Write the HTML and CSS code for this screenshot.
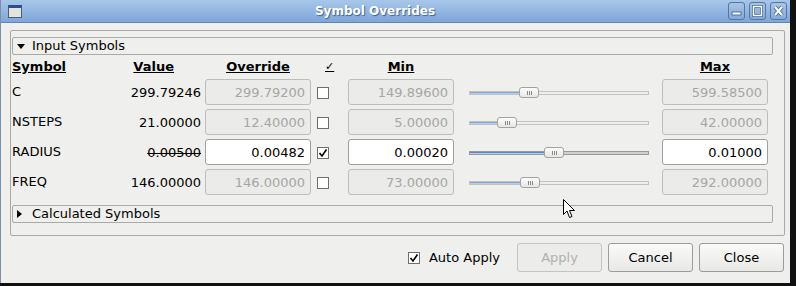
FILE: index.html
```html
<!DOCTYPE html>
<html lang="en">
<head>
    <meta charset="utf-8">
    <title>Symbol Overrides</title>
    <link rel="stylesheet" href="styles.css">
</head>
<body>
    <div class="window">
        <div class="titlebar">
            <span class="win-icon"></span>
            <span class="title">Symbol Overrides</span>
            <div class="win-btns">
                <span class="win-btn"><svg width="17" height="18" viewBox="0 0 17 18"><rect x="4" y="10" width="9" height="3" fill="#fff" stroke="#4d6f9e" stroke-width="1"/></svg></span>
                <span class="win-btn"><svg width="17" height="18" viewBox="0 0 17 18"><rect x="4.5" y="4.5" width="8" height="9" fill="none" stroke="#4d6f9e" stroke-width="3"/><rect x="4.5" y="4.5" width="8" height="9" fill="none" stroke="#fff" stroke-width="1.4"/></svg></span>
                <span class="win-btn"><svg width="17" height="18" viewBox="0 0 17 18"><path d="M5 5 L12 13 M12 5 L5 13" stroke="#4d6f9e" stroke-width="4"/><path d="M5 5 L12 13 M12 5 L5 13" stroke="#fff" stroke-width="2"/></svg></span>
            </div>
        </div>
        <div class="content">
            <div class="frame">
                <div class="section-head"><span class="arrow-down"></span>Input Symbols</div>
                <div class="table">
                    <div class="th th-sym">Symbol</div>
                    <div class="th th-val">Value</div>
                    <div class="th th-ovr">Override</div>
                    <div class="th th-chk">✓</div>
                    <div class="th th-min">Min</div>
                    <div class="th"></div>
                    <div class="th th-max">Max</div>

                    <div class="name">C</div>
                    <div class="val">299.79246</div>
                    <input class="field" disabled value="299.79200">
                    <span class="check"></span>
                    <input class="field" disabled value="149.89600">
                    <div class="slider"><div class="fill" style="width: 52px"></div><span class="handle" style="left: 49px"></span></div>
                    <input class="field" disabled value="599.58500">

                    <div class="name">NSTEPS</div>
                    <div class="val">21.00000</div>
                    <input class="field" disabled value="12.40000">
                    <span class="check"></span>
                    <input class="field" disabled value="5.00000">
                    <div class="slider"><div class="fill" style="width: 30px"></div><span class="handle" style="left: 27px"></span></div>
                    <input class="field" disabled value="42.00000">

                    <div class="name">RADIUS</div>
                    <div class="val"><s>0.00500</s></div>
                    <input class="field" value="0.00482">
                    <span class="check checked"><svg width="10" height="10" viewBox="0 0 10 10"><path d="M1.5 5 L4 8 L8.5 1.5" fill="none" stroke="#000" stroke-width="1.6"/></svg></span>
                    <input class="field" value="0.00020">
                    <div class="slider on"><div class="fill" style="width: 77px"></div><span class="handle" style="left: 74px"></span></div>
                    <input class="field" value="0.01000">

                    <div class="name">FREQ</div>
                    <div class="val">146.00000</div>
                    <input class="field" disabled value="146.00000">
                    <span class="check"></span>
                    <input class="field" disabled value="73.00000">
                    <div class="slider"><div class="fill" style="width: 53px"></div><span class="handle" style="left: 50px"></span></div>
                    <input class="field" disabled value="292.00000">
                </div>
                <div class="section-head calc"><span class="arrow-right"></span>Calculated Symbols</div>
            </div>
            <div class="footer">
                <label class="auto"><span class="check checked"><svg width="10" height="10" viewBox="0 0 10 10"><path d="M1.5 5 L4 8 L8.5 1.5" fill="none" stroke="#000" stroke-width="1.6"/></svg></span>Auto Apply</label>
                <button class="btn" disabled>Apply</button>
                <button class="btn">Cancel</button>
                <button class="btn">Close</button>
            </div>
        </div>
    </div>
    <svg class="cursor" width="13" height="20" viewBox="0 0 13 20"><path d="M0.5 0.5 L0.5 15.5 L4 12 L6.5 18.5 L9 17.5 L6.5 11.5 L11.5 11.5 Z" fill="#fff" stroke="#000" stroke-width="1"/></svg>
</body>
</html>
```

FILE: styles.css
```css
html, body {
    margin: 0;
    background: #111;
}
body {
    width: 796px;
    height: 286px;
    position: relative;
    font-family: "DejaVu Sans", sans-serif;
    font-size: 13px;
    color: #000;
}
.window {
    width: 790px;
    height: 283px;
    background: #efefed;
    box-sizing: border-box;
    border-left: 1px solid #7f8ea3;
}
.titlebar {
    height: 23px;
    box-sizing: border-box;
    background: linear-gradient(#a8c6ea, #7ea6d9);
    border-bottom: 1px solid #5f84b7;
    display: flex;
    align-items: center;
    position: relative;
}
.win-icon {
    width: 12px;
    height: 9px;
    margin-left: 7px;
    border: 1px solid #4c5c78;
    border-top: 3px solid #2b4f8c;
    background: #e4e4de;
}
.title {
    flex: 1;
    text-align: center;
    font-weight: bold;
    font-size: 12px;
    color: #fff;
    text-shadow: 1px 1px 1px #3d5f8f;
}
.win-btns {
    display: flex;
    gap: 4px;
    margin-right: 3px;
}
.win-btn {
    width: 17px;
    height: 18px;
    box-sizing: border-box;
    border: 1px solid #55769f;
    border-radius: 3px;
    background: linear-gradient(#a9c4e6, #86a9d7);
    display: flex;
    align-items: center;
    justify-content: center;
}
.win-btn svg {
    margin: -1px;
}
.content {
    padding: 7px 5px 0 9px;
}
.frame {
    border: 1px solid #a9a9a7;
    border-radius: 2px;
    padding: 6px 11px 12px 1px;
}
.section-head {
    height: 18px;
    box-sizing: border-box;
    border: 1px solid #a9a9a7;
    border-radius: 2px;
    display: flex;
    align-items: center;
    line-height: 16px;
}
.section-head.calc {
    margin-top: 10px;
}
.arrow-down {
    width: 0;
    height: 0;
    border-left: 4px solid transparent;
    border-right: 4px solid transparent;
    border-top: 5px solid #000;
    margin: 0 7px 0 4px;
}
.arrow-right {
    width: 0;
    height: 0;
    border-top: 4px solid transparent;
    border-bottom: 4px solid transparent;
    border-left: 5px solid #000;
    margin: 0 10px 0 4px;
}
.table {
    display: grid;
    grid-template-columns: 60px 129px 110px 18px 125px 195px 119px;
    grid-template-rows: 20px repeat(4, 26px);
    row-gap: 4px;
    align-items: center;
}
.th {
    font-weight: bold;
    text-decoration: underline;
    align-self: start;
    height: 20px;
    box-sizing: border-box;
    padding-top: 4px;
    line-height: 16px;
}
.th-val {
    text-align: right;
    padding-right: 27px;
}
.th-ovr, .th-min, .th-max {
    text-align: center;
    width: 106px;
    justify-self: end;
}
.th-chk {
    font-weight: normal;
    padding-left: 14px;
    font-size: 11px;
}
.name {
    line-height: 16px;
}
.val {
    text-align: right;
}
.val s {
    text-decoration-thickness: 1px;
}
.field {
    width: 106px;
    height: 26px;
    box-sizing: border-box;
    justify-self: end;
    font-family: "DejaVu Sans", sans-serif;
    font-size: 13px;
    text-align: right;
    padding: 0 5px 0 0;
    border: 1px solid #9f9f9d;
    border-radius: 3px;
    background: #fff;
    color: #000;
}
.field:disabled {
    background: #ebebe9;
    border-color: #bdbdbb;
    color: #a6a6a4;
}
.check {
    width: 12px;
    height: 12px;
    box-sizing: border-box;
    border: 1px solid #6e6e6c;
    background: #fff;
    justify-self: end;
    margin-top: 2px;
    display: flex;
    align-items: center;
    justify-content: center;
}
.slider {
    width: 180px;
    height: 4px;
    justify-self: end;
    box-sizing: border-box;
    border: 1px solid #c2c2c0;
    background: #eeeeec;
    position: relative;
    margin-top: 1px;
}
.slider .fill {
    height: 2px;
    background: #7da6db;
    border-bottom: 1px solid #b7cdea;
    box-sizing: border-box;
}
.slider.on {
    border-color: #999997;
    background: #d0d0ce;
}
.slider.on .fill {
    background: #5b87c3;
}
.handle {
    position: absolute;
    top: -5px;
    width: 20px;
    height: 11px;
    box-sizing: border-box;
    border: 1px solid #a2a2a0;
    border-radius: 3px;
    background: linear-gradient(#fdfdfd, #e6e6e4) center / cover no-repeat;
}
.handle::after {
    content: "";
    position: absolute;
    left: 7px;
    top: 3px;
    width: 5px;
    height: 4px;
    background: repeating-linear-gradient(90deg, #8a8a88 0 1px, transparent 1px 2px);
}
.footer {
    display: flex;
    justify-content: flex-end;
    align-items: center;
    gap: 6px;
    padding: 7px 1px 0 0;
}
.auto {
    display: flex;
    align-items: center;
    margin-right: 11px;
}
.auto .check {
    margin: 0 9px 0 0;
}
.btn {
    width: 85px;
    height: 29px;
    font-family: "DejaVu Sans", sans-serif;
    font-size: 13px;
    color: #000;
    border: 1px solid #9c9c9a;
    border-radius: 3px;
    background: linear-gradient(#fafaf9, #e8e8e6);
}
.btn:disabled {
    color: #b0b0ae;
    border-color: #c4c4c2;
    background: #ececea;
}
.cursor {
    position: absolute;
    left: 563px;
    top: 199px;
}
```
